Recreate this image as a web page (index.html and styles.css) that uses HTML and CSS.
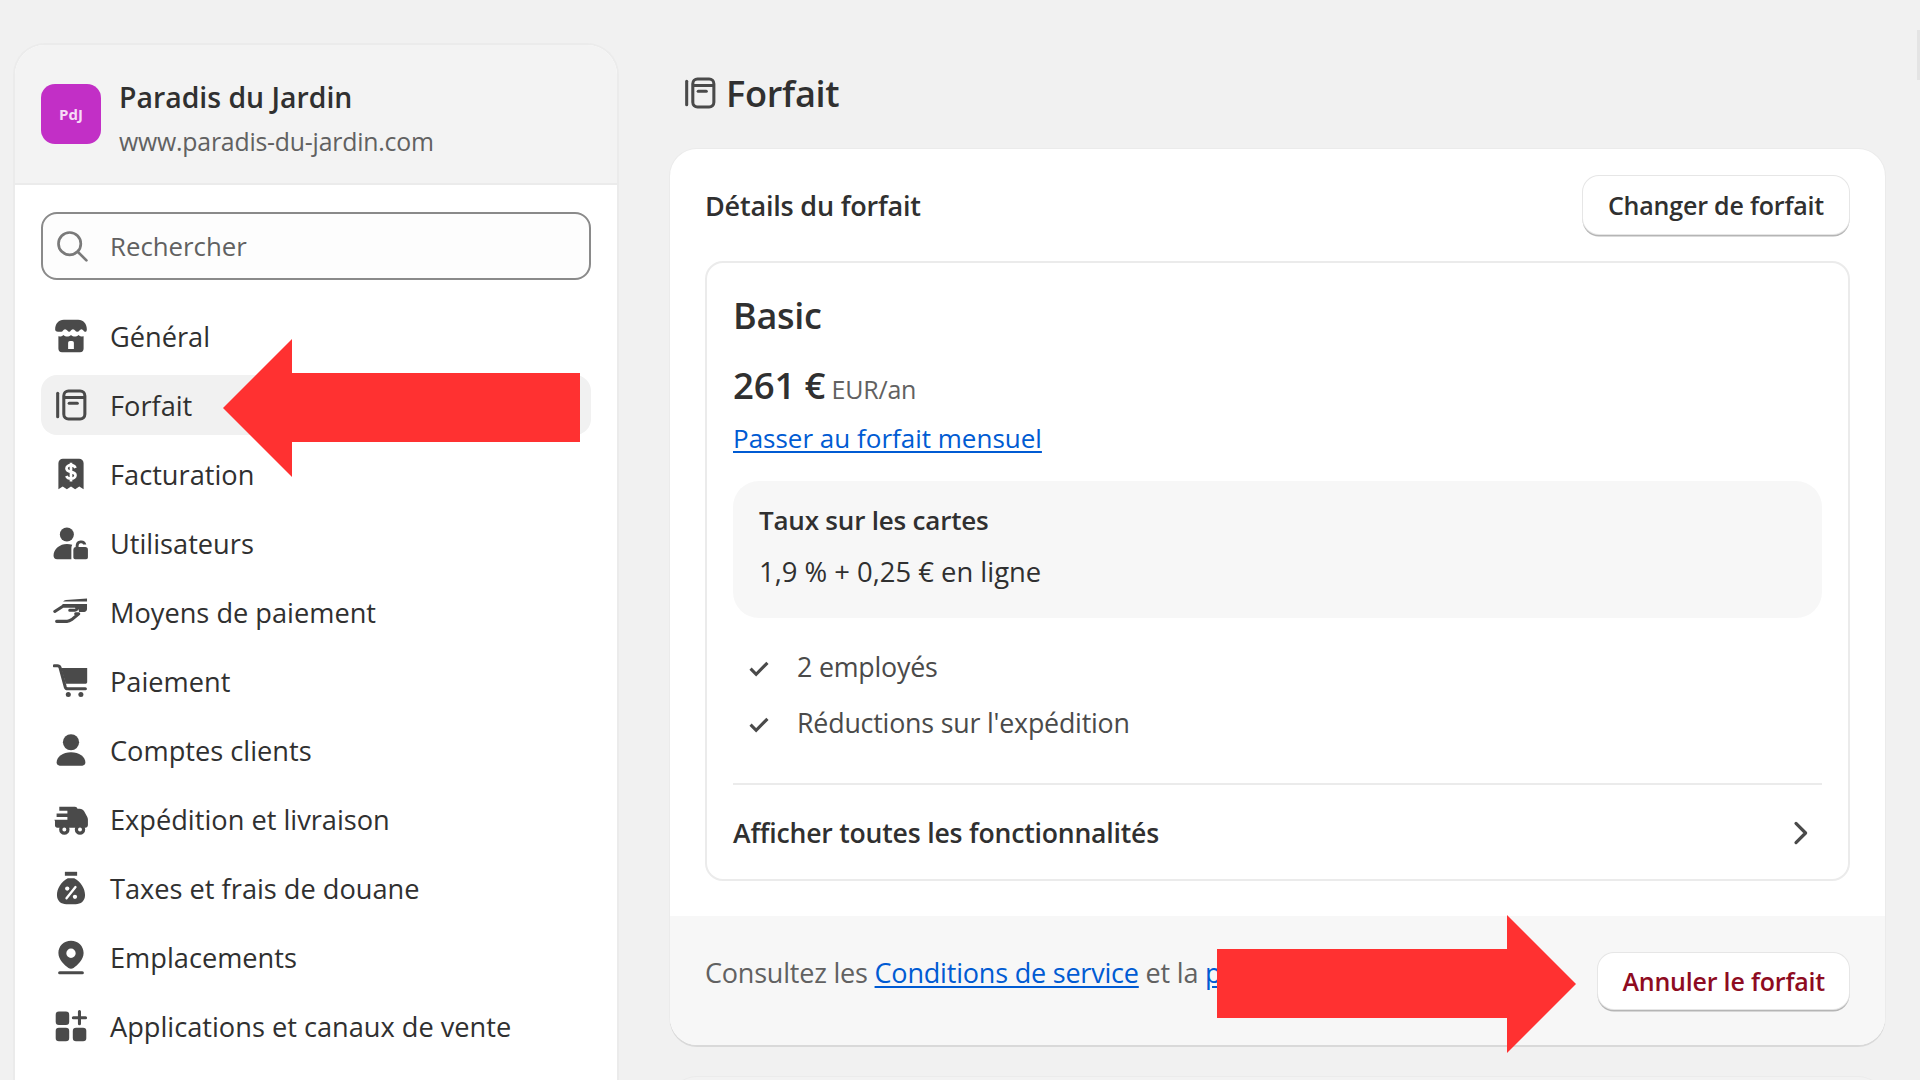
FILE: index.html
```html
<!DOCTYPE html>
<html lang="fr">
<head>
<meta charset="utf-8">
<title>Forfait</title>
<link rel="stylesheet" href="styles.css">
</head>
<body>
<div class="page">
  <aside class="sidebar">
    <header class="shop">
      <div class="shop-logo">PdJ</div>
      <div class="shop-info">
        <div class="shop-name">Paradis du Jardin</div>
        <div class="shop-url">www.paradis-du-jardin.com</div>
      </div>
    </header>
    <div class="sidebar-body">
      <div class="search">
        <svg class="search-icon" viewBox="0 0 20 20"><circle cx="8.700" cy="8.700" r="6.200"/><path d="M13.300 13.300l4.700 4.700"/></svg>
        <span>Rechercher</span>
      </div>
      <nav class="nav">
        <a class="nav-item"><svg class="ico" viewBox="0 0 20 20"><path d="M6 1h8c2.800 0 4.800 2.300 4.800 5.200 0 .9-.3 1.500-.9 1.500-.9 0-1.100-1.400-2.100-1.400s-1.200 1.400-2.300 1.400-1.300-1.400-2.400-1.400-1.300 1.400-2.100 1.400-1.200-1.400-2.300-1.400-1.200 1.400-2.100 1.400C1.500 7.700 1.200 7.100 1.200 6.200 1.200 3.300 3.200 1 6 1z"/><path fill-rule="evenodd" d="M3 10.200c1 .2 1.900 0 2.800-.8 1.300 1.200 2.900 1.200 4.200 0 1.300 1.200 2.900 1.200 4.200 0 .9.800 1.800 1 2.800.8V17a2 2 0 0 1-2 2H5a2 2 0 0 1-2-2zM8.400 13.800v3.400h3.200v-3.400a1 1 0 0 0-1-1H9.400a1 1 0 0 0-1 1z"/></svg>Général</a>
        <a class="nav-item active"><svg class="ico" viewBox="0 0 20 20"><g class="line"><path d="M2.600 3.500v13"/><rect x="6" y="2.200" width="11.700" height="15.600" rx="2.600"/><path d="M6.500 5.800h10.500"/><path d="M9 9h4.500"/></g></svg>Forfait</a>
        <a class="nav-item"><svg class="ico" viewBox="0 0 20 20"><path d="M5.500 1.500h9A2.500 2.500 0 0 1 17 4v14.500l-2.400-1.500-2.300 1.500-2.300-1.500-2.300 1.500L5.400 17 3 18.500V4a2.500 2.500 0 0 1 2.500-2.500z"/><path class="cut" d="M12.500 6.600c-.4-1-1.400-1.500-2.500-1.500-1.400 0-2.500.8-2.500 1.900 0 2.600 5 1.100 5 3.700 0 1.100-1.100 1.900-2.500 1.900-1.200 0-2.200-.6-2.600-1.500M10 3.800v10.400"/></svg>Facturation</a>
        <a class="nav-item"><svg class="ico" viewBox="0 0 20 20"><circle cx="7.700" cy="5.300" r="3.900"/><path d="M.3 17a2 2 0 0 0 2 2h7.900v-6.200c0-.7.200-1.300.5-1.800a9 9 0 0 0-3-.5c-3.800 0-7.400 2.700-7.400 6.500z"/><path fill-rule="evenodd" d="M12.300 19a1 1 0 0 1-1-1v-4.300a1.500 1.500 0 0 1 1.300-1.500v-.7a3 3 0 0 1 5.900-.7h-1.700a1.400 1.400 0 0 0-2.600.7v.7h3.700a1.500 1.500 0 0 1 1.500 1.500V18a1 1 0 0 1-1 1z"/></svg>Utilisateurs</a>
        <a class="nav-item"><svg class="ico" viewBox="0 0 20 20"><path d="M7.200 3.300 18.900 2.500v1.700H5.600c.4-.5 1-.8 1.600-.9z"/><path d="M5 5.600h13.900v2.800c0 1-.7 1.600-1.600 1.600h-2.800l-.3-1.200c-.3-1-1.100-1.600-2.100-1.600H6.600z"/><path class="line" d="M1 9.700 5.500 6.800h6.700c1.300 0 1.600 2.200 0 2.200H9.300M12.600 11h1.700l-3.900 3.200c-.8.600-1.700 1-2.600 1H2"/></svg>Moyens de paiement</a>
        <a class="nav-item"><svg class="ico" viewBox="0 0 20 20"><path class="line" d="M.7 1.500h1.700c.7 0 1.300.4 1.500 1l2.900 10.800c.2.600.7 1 1.300 1H18"/><path d="M4.500 2.800H19v7.700c0 .6-.5 1-1 1H7.100z"/><circle cx="8.500" cy="17.500" r="1.400"/><circle cx="15.500" cy="17.500" r="1.400"/></svg>Paiement</a>
        <a class="nav-item"><svg class="ico" viewBox="0 0 20 20"><circle cx="10" cy="5.700" r="4.500"/><path d="M10 11.200c-4.500 0-8 2.400-8 5.800 0 1 .8 1.700 1.700 1.700h12.600c.9 0 1.700-.7 1.700-1.700 0-3.400-3.500-5.800-8-5.800z"/></svg>Comptes clients</a>
        <a class="nav-item"><svg class="ico" viewBox="0 0 20 20"><path d="M3.500 3.200h8.700c.7 0 1.200.4 1.400 1.100h1.200c1.100 0 2 .5 2.500 1.400l1.600 2.900c.3.500.5 1.100.5 1.700v3c0 .9-.6 1.500-1.500 1.500H2.400c-.8 0-1.300-.6-1.300-1.300v-2.600H.8V8.900h1.200V6H3.500z"/><path class="cut" d="M0 6.200h8M0 9.600h8"/><circle class="ring" cx="6.300" cy="15.800" r="2"/><circle class="ring" cx="15" cy="15.800" r="2"/></svg>Expédition et livraison</a>
        <a class="nav-item"><svg class="ico" viewBox="0 0 20 20"><path d="M6.600 1h6.800v2.200H6.600z"/><path d="M8.200 4.600h3.600c3.800 2.100 6 5.900 6 9.300 0 3.400-2.400 5.100-5.200 5.100H7.400c-2.800 0-5.200-1.700-5.200-5.100 0-3.400 2.200-7.200 6-9.300z"/><path class="cut thin" d="M7.500 15.700l5-6.200"/><circle class="hole" cx="7.900" cy="10.300" r="1.200"/><circle class="hole" cx="12.200" cy="14.900" r="1.200"/></svg>Taxes et frais de douane</a>
        <a class="nav-item"><svg class="ico" viewBox="0 0 20 20"><path fill-rule="evenodd" d="M10 1c4 0 7 3 7 6.800 0 3.700-3.500 6.900-5.600 8.300-.9.600-1.900.6-2.800 0C6.500 14.700 3 11.500 3 7.800 3 4 6 1 10 1zm0 4.300a2.600 2.600 0 1 0 0 5.200 2.600 2.600 0 0 0 0-5.200z"/><path class="line" d="M3.700 18.700h12.600"/></svg>Emplacements</a>
        <a class="nav-item"><svg class="ico" viewBox="0 0 20 20"><rect x="1.500" y="2" width="7.500" height="7.500" rx="1.800"/><rect x="1.500" y="11" width="7.500" height="7.500" rx="1.800"/><rect x="11" y="11" width="7.500" height="7.500" rx="1.800"/><path class="line" d="M14.700 2v6.800M11.300 5.400h6.800"/></svg>Applications et canaux de vente</a>
        <a class="nav-item"><svg class="ico" viewBox="0 0 20 20"><circle cx="10" cy="10" r="8"/></svg></a>
      </nav>
    </div>
  </aside>

  <main class="main">
    <h1 class="title"><svg class="title-ico" viewBox="0 0 20 20"><g class="line"><path d="M2.600 3.500v13"/><rect x="6" y="2.200" width="11.700" height="15.600" rx="2.600"/><path d="M6.500 5.800h10.500"/><path d="M9 9h4.500"/></g></svg>Forfait</h1>

    <section class="card">
      <div class="card-head">
        <h2 class="card-title">Détails du forfait</h2>
        <button class="btn">Changer de forfait</button>
      </div>
      <div class="plan">
        <div class="plan-name">Basic</div>
        <div class="plan-price"><strong>261 €</strong> <span>EUR/an</span></div>
        <a class="link plan-switch">Passer au forfait mensuel</a>
        <div class="rates">
          <div class="rates-title">Taux sur les cartes</div>
          <div class="rates-value">1,9 % + 0,25 € en ligne</div>
        </div>
        <ul class="features">
          <li><svg class="check" viewBox="0 0 20 20"><path d="M3.500 10.500l4.300 4.300L16.500 6"/></svg>2 employés</li>
          <li><svg class="check" viewBox="0 0 20 20"><path d="M3.500 10.500l4.300 4.300L16.500 6"/></svg>Réductions sur l'expédition</li>
        </ul>
        <div class="all-features">
          <span>Afficher toutes les fonctionnalités</span>
          <svg class="chevron" viewBox="0 0 20 20"><path d="M7.500 4l6 6-6 6"/></svg>
        </div>
      </div>
      <footer class="card-foot">
        <p class="terms">Consultez les <a class="link">Conditions de service</a> et la <a class="link">politique</a></p>
        <button class="btn btn-danger">Annuler le forfait</button>
      </footer>
    </section>

    <section class="card card-next"></section>
  </main>
</div>

<svg class="arrow arrow-left" viewBox="0 0 357 138"><polygon points="0,69 69,0 69,34 357,34 357,103 69,103 69,138"/></svg>
<svg class="arrow arrow-right" viewBox="0 0 359 138"><polygon points="359,69 290,0 290,34 0,34 0,103 290,103 290,138"/></svg>
<div class="scroll-thumb"></div>
</body>
</html>
```
FILE: styles.css
```css
* { box-sizing: border-box; }
html, body { margin: 0; height: 100%; }
body {
  background: #f1f1f1;
  font-family: "Open Sans", "Noto Sans", "Liberation Sans", sans-serif;
  color: #303030;
  overflow: hidden;
  position: relative;
}
h1, h2, p, ul { margin: 0; padding: 0; }

.page { display: flex; height: 1080px; padding: 45px 35px 0 15px; gap: 53px; overflow: hidden; }

/* Sidebar */
.sidebar {
  flex: 0 0 602px;
  height: 1100px;
  background: #fff;
  border-radius: 30px 30px 0 0;
  box-shadow: 0 0 0 2px #ebebeb;
  overflow: hidden;
}
.shop {
  display: flex;
  align-items: center;
  gap: 18px;
  height: 140px;
  padding: 0 26px;
  background: #f3f3f3;
  border-bottom: 2px solid #ebebeb;
}
.shop-logo {
  width: 60px;
  height: 60px;
  border-radius: 14px;
  background: #c22fc6;
  color: #f6dcf6;
  font-size: 15px;
  font-weight: 700;
  display: flex;
  align-items: center;
  justify-content: center;
}
.shop-info { padding-top: 8px; }
.shop-name { font-size: 28.400px; font-weight: 600; line-height: 38px; margin-bottom: 7px; }
.shop-url { font-size: 24.800px; line-height: 36px; color: #616161; letter-spacing: -.2px; }

.sidebar-body { padding: 27px 26px 0; }
.search {
  display: flex;
  align-items: center;
  height: 68px;
  padding: 0 11px;
  gap: 20px;
  border: 2px solid #8a8a8a;
  border-radius: 16px;
  background: #fdfdfd;
  color: #616161;
  font-size: 25.800px;
}
.search-icon { width: 36px; height: 36px; fill: none; stroke: #7a7a7a; stroke-width: 1.500; stroke-linecap: round; }

.nav { margin-top: 26px; display: flex; flex-direction: column; gap: 9px; }
.nav-item {
  display: flex;
  align-items: center;
  gap: 21px;
  height: 60px;
  padding: 0 12px;
  border-radius: 16px;
  font-size: 27.200px;
  font-weight: 500;
  color: #303030;
  white-space: nowrap;
}
.nav-item.active { background: #f1f1f1; }
.ico { width: 36px; height: 36px; flex: none; fill: #4a4a4a; }
.line { fill: none; stroke: #4a4a4a; stroke-width: 1.700; stroke-linecap: round; stroke-linejoin: round; }
.cut { fill: none; stroke: #fff; stroke-width: 1.500; }
.cut.thin { stroke-width: 1.300; stroke-linecap: round; }
.hole { fill: #fff; }
.ring { fill: #fff; stroke: #4a4a4a; stroke-width: 1.800; }

/* Main */
.main { flex: 1; min-width: 0; display: flex; flex-direction: column; }
.title {
  flex: none;
  display: flex;
  align-items: center;
  gap: 8px;
  height: 96px;
  margin: 0 0 8px 12px;
  font-size: 36.200px;
  font-weight: 600;
  letter-spacing: -.3px;
}
.title-ico { width: 36px; height: 36px; flex: none; }

.card {
  background: #fff;
  border-radius: 27px;
  box-shadow: 0 2px 0 #d9d9d9, 0 0 0 1px #ebebeb;
  overflow: hidden;
  flex: none;
}
.card-head {
  display: flex;
  align-items: center;
  justify-content: space-between;
  height: 112px;
  padding: 0 36px 0 35px;
}
.card-title { font-size: 27px; font-weight: 600; letter-spacing: -.2px; }
.btn {
  height: 58px;
  padding: 0 25px;
  border: 0;
  border-radius: 16px;
  background: #fff;
  box-shadow: 0 0 0 1px #e6e6e6, 0 2px 0 .5px #b5b5b5;
  font: 600 25px "Open Sans", "Noto Sans", sans-serif;
  color: #303030;
  letter-spacing: -.2px;
}
.btn-danger { height: 56px; padding: 0 24px; color: #8e0b21; }

.plan {
  margin: 0 35px 35px;
  height: 620px;
  padding: 18px 26px 0;
  border: 2px solid #ebebeb;
  border-radius: 18px;
}
.plan-name { font-size: 36px; font-weight: 600; line-height: 70px; letter-spacing: -.3px; }
.plan-price { line-height: 68px; font-size: 25px; color: #616161; letter-spacing: -.2px; }
.plan-price strong { font-size: 36.600px; font-weight: 600; color: #303030; }
.plan-switch { display: block; font-size: 26px; line-height: 36px; margin-top: -3px; }
.link { color: #005bd3; text-decoration: underline; text-underline-offset: 3px; white-space: nowrap; }

.rates {
  margin-top: 25px;
  height: 137px;
  padding: 21px 26px;
  background: #f7f7f7;
  border-radius: 26px;
}
.rates-title { font-size: 26px; font-weight: 600; line-height: 36px; letter-spacing: -.2px; }
.rates-value { font-size: 27.400px; line-height: 36px; margin-top: 16px; }

.features { list-style: none; margin-top: 30px; display: flex; flex-direction: column; gap: 20px; }
.features li {
  display: flex;
  align-items: center;
  gap: 25px;
  height: 36px;
  padding-left: 13px;
  font-size: 26.800px;
  color: #4a4a4a;
  letter-spacing: -.2px;
}
.check { width: 26px; height: 26px; flex: none; fill: none; stroke: #4a4a4a; stroke-width: 2.400; margin-top: 4px; }

.all-features {
  margin-top: 43px;
  border-top: 2px solid #ebebeb;
  height: 97px;
  display: flex;
  align-items: center;
  justify-content: space-between;
  font-size: 26.600px;
  font-weight: 600;
  letter-spacing: -.2px;
}
.chevron { width: 32px; height: 32px; fill: none; stroke: #4a4a4a; stroke-width: 2; stroke-linecap: round; stroke-linejoin: round; margin-right: 6px; }

.card-foot {
  display: flex;
  align-items: center;
  justify-content: space-between;
  height: 129px;
  padding: 0 36px 0 35px;
  background: #f7f7f7;
}
.terms { font-size: 27px; color: #616161; white-space: nowrap; letter-spacing: -.2px; padding-bottom: 16px; }

.card-next { margin-top: 32px; height: 60px; background: #f2f2f2; }

/* Annotations lying over the screenshot */
.arrow { position: absolute; fill: #ff3131; }
.arrow-left { left: 222.500px; top: 339px; width: 357px; height: 138px; }
.arrow-right { left: 1217px; top: 915px; width: 359px; height: 138px; }
.scroll-thumb { position: absolute; right: 0; top: 30px; width: 3px; height: 50px; background: #e4e4e4; }
```
